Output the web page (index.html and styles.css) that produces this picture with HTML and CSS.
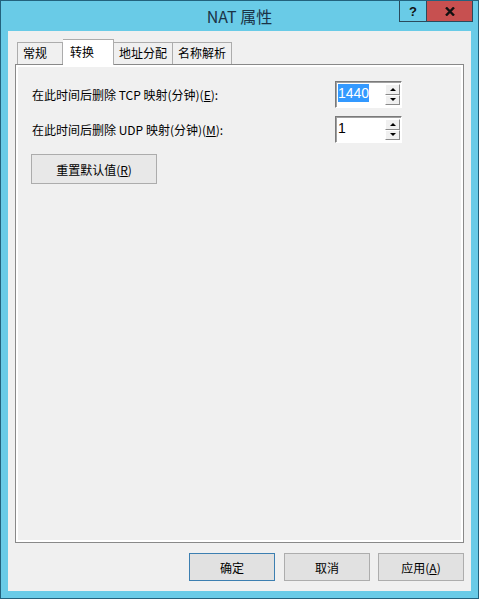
FILE: index.html
```html
<!DOCTYPE html>
<html lang="zh-CN">
<head>
    <meta charset="UTF-8">
    <title>NAT 属性</title>
    <link rel="stylesheet" href="styles.css">
</head>
<body>
<div class="window">
    <div class="titlebar">
        <span></span>
        <div class="title">NAT 属性</div>
        <div class="controls">
            <span class="ctl ctl-help">?</span>
            <span class="ctl ctl-close">
                <svg width="10" height="9" viewBox="0 0 10 9"><path d="M1 0.5 L9 8.5 M9 0.5 L1 8.5" stroke="#111" stroke-width="2.4"/></svg>
            </span>
        </div>
    </div>
    <div class="client">
        <!-- 选项卡 -->
        <div class="tabs">
            <span class="tab tab-first">常规</span>
            <span class="tab tab-on">转换</span>
            <span class="tab">地址分配</span>
            <span class="tab">名称解析</span>
        </div>
        <div class="panel">
            <div class="row">
                <span class="label">在此时间后删除 TCP 映射(分钟)(<u>E</u>):</span>
                <div class="spin">
                    <div class="spin-val"><span class="sel">1440</span></div>
                    <div class="spin-btns">
                        <span class="arr"><i class="up"></i></span>
                        <span class="arr"><i class="down"></i></span>
                    </div>
                </div>
            </div>
            <div class="row">
                <span class="label">在此时间后删除 UDP 映射(分钟)(<u>M</u>):</span>
                <div class="spin">
                    <div class="spin-val">1</div>
                    <div class="spin-btns">
                        <span class="arr"><i class="up"></i></span>
                        <span class="arr"><i class="down"></i></span>
                    </div>
                </div>
            </div>
            <button class="btn btn-reset">重置默认值(<u>R</u>)</button>
        </div>
        <div class="actions">
            <button class="btn btn-default">确定</button>
            <button class="btn">取消</button>
            <button class="btn">应用(<u>A</u>)</button>
        </div>
    </div>
</div>
</body>
</html>
```

FILE: styles.css
```css
html, body {
    margin: 0;
    padding: 0;
}
body {
    font-family: "Noto Sans CJK SC", "Liberation Sans", sans-serif;
    font-size: 12px;
    color: #000;
}
.window {
    width: 479px;
    height: 599px;
    box-sizing: border-box;
    border: 1px solid #23627d;
    background: #69cbe7;
    display: flex;
    flex-direction: column;
}
.titlebar {
    height: 30px;
    display: grid;
    grid-template-columns: 1fr auto 1fr;
    align-items: start;
}
.title {
    font-size: 16px;
    line-height: 30px;
    color: #1b3346;
}
.controls {
    justify-self: end;
    display: flex;
    margin-right: 5px;
}
.ctl {
    height: 20px;
    border: 1px solid #2a4a5c;
    border-top: none;
    display: flex;
    align-items: center;
    justify-content: center;
    box-sizing: content-box;
}
.ctl-help {
    width: 26px;
    border-right: none;
    font-family: "Liberation Sans", sans-serif;
    font-weight: bold;
    font-size: 13px;
    color: #111;
}
.ctl-close {
    width: 45px;
    background: #c75050;
}
.client {
    flex: 1;
    margin: 0 7px 7px 7px;
    background: #f0f0f0;
    display: flex;
    flex-direction: column;
}
.tabs {
    display: flex;
    align-items: flex-end;
    margin: 9px 0 0 9px;
    height: 24px;
}
.tab {
    height: 21px;
    line-height: 20px;
    padding: 0 5px;
    border: 1px solid #acacac;
    border-bottom: none;
    border-left: none;
    background: #f0f0f0;
    white-space: nowrap;
}
.tab-first {
    border-left: 1px solid #acacac;
    padding: 0 15px 0 5px;
}
.tab-on {
    height: 25px;
    line-height: 24px;
    margin-bottom: -1px;
    padding: 0 19px 0 7px;
    background: #fff;
    position: relative;
    z-index: 1;
}
.panel {
    flex: 1;
    margin: 0 7px;
    border: 1px solid #898989;
    box-shadow: inset 0 0 0 2px #fff;
    padding: 16px;
}
.row {
    width: 370px;
    height: 27px;
    display: flex;
    justify-content: space-between;
    align-items: center;
    margin-bottom: 8px;
}
.spin {
    width: 67px;
    height: 27px;
    box-sizing: border-box;
    border: 1px solid;
    border-color: #7a7a7a #fff #fff #7a7a7a;
    box-shadow: inset 1px 1px 0 #a0a0a0;
    background: #fff;
    display: flex;
}
.spin-val {
    flex: 1;
    padding: 2px 0 0 2px;
    font-family: "Liberation Sans", sans-serif;
    font-size: 14px;
    line-height: 18px;
}
.sel {
    background: #3399ff;
    color: #fff;
    display: inline-block;
}
.spin-btns {
    width: 15px;
    margin: 2px 1px 2px 0;
    display: flex;
    flex-direction: column;
}
.arr {
    flex: 1;
    background: #f0f0f0;
    border: 1px solid;
    border-color: #fff #8a8a8a #8a8a8a #fff;
    display: flex;
    align-items: center;
    justify-content: center;
}
.arr i {
    width: 0;
    height: 0;
    border-left: 3px solid transparent;
    border-right: 3px solid transparent;
}
.arr .up {
    border-bottom: 3px solid #000;
}
.arr .down {
    border-top: 3px solid #000;
}
.btn {
    font-family: "Noto Sans CJK SC", "Liberation Sans", sans-serif;
    font-size: 12px;
    color: #000;
    background: #e1e1e1;
    border: 1px solid #adadad;
    padding: 0;
}
.btn-reset {
    width: 126px;
    height: 30px;
    margin: 3px 0 0 -1px;
    background: #e8e8e8;
    border-color: #acacac;
}
.actions {
    display: flex;
    justify-content: flex-end;
    gap: 8px;
    margin: 10px 7px 10px 0;
}
.actions .btn {
    width: 86px;
    height: 28px;
}
.btn-default {
    border: 1px solid #3c7fb1;
    margin-right: 1px;
}
```
